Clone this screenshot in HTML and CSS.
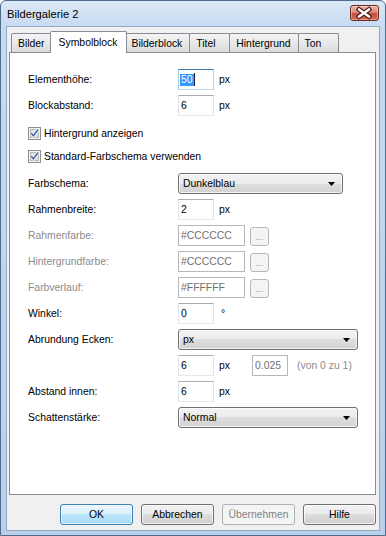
FILE: index.html
```html
<!DOCTYPE html>
<html lang="de">
<head>
    <meta charset="UTF-8">
    <meta name="viewport" content="width=device-width, initial-scale=1.0">
    <title>Bildergalerie 2</title>
    <link rel="stylesheet" href="styles.css">
</head>
<body>
    <div class="window">
        <div class="titlebar">
            <span class="title">Bildergalerie 2</span>
            <div class="close-btn">
                <svg width="27" height="14" viewBox="0 0 27 14">
                    <path d="M8 3.5 L18 10.5 M18 3.5 L8 10.5" stroke="#4a1a14" stroke-width="4.6" stroke-linecap="square" fill="none"/>
                    <path d="M8 3.5 L18 10.5 M18 3.5 L8 10.5" stroke="#ffffff" stroke-width="2.4" stroke-linecap="square" fill="none"/>
                </svg>
            </div>
        </div>

        <div class="client">
            <div class="tabs">
                <div class="tab">Bilder</div>
                <div class="tab active">Symbolblock</div>
                <div class="tab">Bilderblock</div>
                <div class="tab">Titel</div>
                <div class="tab">Hintergrund</div>
                <div class="tab">Ton</div>
            </div>

            <div class="panel">
                <div class="row">
                    <span class="label">Elementhöhe:</span>
                    <div class="textbox small focus"><span class="sel">50</span><span class="caret"></span></div>
                    <span class="unit">px</span>
                </div>
                <div class="row">
                    <span class="label">Blockabstand:</span>
                    <div class="textbox small">6</div>
                    <span class="unit">px</span>
                </div>

                <div class="check-row first">
                    <span class="checkbox">
                        <svg width="13" height="13" viewBox="0 0 13 13">
                            <rect x="0.5" y="0.5" width="12" height="12" fill="#f4f4f4" stroke="#8e8f8f"/>
                            <rect x="2.5" y="2.5" width="8" height="8" fill="#dde0e5" stroke="#b4b9bf"/>
                            <path d="M3.2 6.2 L5.4 8.8 L9.8 3" fill="none" stroke="#ffffff" stroke-width="3"/>
                            <path d="M3.2 6.2 L5.4 8.8 L9.8 3" fill="none" stroke="#4b62a0" stroke-width="1.6"/>
                        </svg>
                    </span>
                    <span>Hintergrund anzeigen</span>
                </div>
                <div class="check-row last">
                    <span class="checkbox">
                        <svg width="13" height="13" viewBox="0 0 13 13">
                            <rect x="0.5" y="0.5" width="12" height="12" fill="#f4f4f4" stroke="#8e8f8f"/>
                            <rect x="2.5" y="2.5" width="8" height="8" fill="#dde0e5" stroke="#b4b9bf"/>
                            <path d="M3.2 6.2 L5.4 8.8 L9.8 3" fill="none" stroke="#ffffff" stroke-width="3"/>
                            <path d="M3.2 6.2 L5.4 8.8 L9.8 3" fill="none" stroke="#4b62a0" stroke-width="1.6"/>
                        </svg>
                    </span>
                    <span>Standard-Farbschema verwenden</span>
                </div>

                <div class="row">
                    <span class="label">Farbschema:</span>
                    <div class="combo short">
                        <span>Dunkelblau</span>
                        <svg class="arrow" width="7" height="4" viewBox="0 0 7 4"><path d="M0 0 H7 L3.5 4 Z" fill="#000"/></svg>
                    </div>
                </div>
                <div class="row">
                    <span class="label">Rahmenbreite:</span>
                    <div class="textbox small">2</div>
                    <span class="unit">px</span>
                </div>
                <div class="row">
                    <span class="label disabled">Rahmenfarbe:</span>
                    <div class="textbox color disabled">#CCCCCC</div>
                    <div class="dots-btn">...</div>
                </div>
                <div class="row">
                    <span class="label disabled">Hintergrundfarbe:</span>
                    <div class="textbox color disabled">#CCCCCC</div>
                    <div class="dots-btn">...</div>
                </div>
                <div class="row">
                    <span class="label disabled">Farbverlauf:</span>
                    <div class="textbox color disabled">#FFFFFF</div>
                    <div class="dots-btn">...</div>
                </div>
                <div class="row">
                    <span class="label">Winkel:</span>
                    <div class="textbox small">0</div>
                    <span class="degree">°</span>
                </div>
                <div class="row">
                    <span class="label">Abrundung Ecken:</span>
                    <div class="combo wide">
                        <span>px</span>
                        <svg class="arrow" width="7" height="4" viewBox="0 0 7 4"><path d="M0 0 H7 L3.5 4 Z" fill="#000"/></svg>
                    </div>
                </div>
                <div class="row">
                    <span class="label"></span>
                    <div class="textbox small">6</div>
                    <span class="unit">px</span>
                    <div class="textbox small disabled ratio">0.025</div>
                    <span class="hint">(von 0 zu 1)</span>
                </div>
                <div class="row">
                    <span class="label">Abstand innen:</span>
                    <div class="textbox small">6</div>
                    <span class="unit">px</span>
                </div>
                <div class="row">
                    <span class="label">Schattenstärke:</span>
                    <div class="combo wide">
                        <span>Normal</span>
                        <svg class="arrow" width="7" height="4" viewBox="0 0 7 4"><path d="M0 0 H7 L3.5 4 Z" fill="#000"/></svg>
                    </div>
                </div>
            </div>

            <div class="buttons">
                <div class="btn default">OK</div>
                <div class="btn">Abbrechen</div>
                <div class="btn disabled">Übernehmen</div>
                <div class="btn">Hilfe</div>
            </div>
        </div>
    </div>
</body>
</html>
```

FILE: styles.css
```css
* {
    margin: 0;
    padding: 0;
    box-sizing: border-box;
}

body {
    width: 386px;
    height: 536px;
    overflow: hidden;
    font-family: "Liberation Sans", Arial, sans-serif;
    font-size: 10.4px;
    color: #000;
    background: #fff;
}

/* window frame */
.window {
    width: 386px;
    height: 536px;
    border: 1px solid #4f6c8f;
    border-radius: 6px 6px 0 0;
    background: linear-gradient(#dbe7f6, #c7daf0 26px, #bad0ea);
    padding: 0 6px 5px;
    display: flex;
    flex-direction: column;
}

.titlebar {
    height: 26px;
    display: flex;
    justify-content: space-between;
    align-items: flex-start;
}

.title {
    font-size: 11.2px;
    margin-top: 7px;
    color: #000;
}

.close-btn {
    width: 29px;
    height: 16px;
    margin-top: 4px;
    border: 1px solid #6e2a22;
    border-radius: 3px;
    background: linear-gradient(#eab4a8, #d98e7f 45%, #c5523d 52%, #cf6b52);
    box-shadow: inset 0 0 0 1px rgba(255, 255, 255, 0.35);
}

.close-btn svg {
    display: block;
}

/* client area */
.client {
    flex: 1;
    background: #f0f0f0;
    box-shadow: 0 0 0 1px #93a9c4;
    padding: 4px 3px 5px 2px;
    display: flex;
    flex-direction: column;
}

.tabs {
    display: flex;
    align-items: flex-end;
    height: 21px;
    padding-left: 2px;
    position: relative;
    z-index: 1;
}

.tab {
    height: 19px;
    min-width: 41px;
    padding: 1px 7px 0 6px;
    line-height: 17px;
    border: 1px solid #898c95;
    border-bottom: none;
    border-radius: 2px 2px 0 0;
    margin-right: -1px;
    background: linear-gradient(#f4f4f4, #e6e6e6 60%, #dadada);
}

.tab.active {
    height: 22px;
    padding: 1px 9px 0 8px;
    line-height: 19px;
    margin: 0 -3px -1px -2px;
    background: #fff;
    position: relative;
    z-index: 2;
}

.panel {
    height: 443px;
    background: #fff;
    border: 1px solid #898c95;
    padding: 16px 0 0 18px;
    display: flex;
    flex-direction: column;
    gap: 5px;
}

/* form rows */
.row {
    display: flex;
    align-items: center;
    height: 21px;
}

.label {
    width: 150px;
    flex-shrink: 0;
}

.label.disabled {
    color: #8c8c8c;
}

.textbox {
    height: 21px;
    border: 1px solid;
    border-color: #abadb3 #e2e3ea #e3e9ef #e2e3ea;
    background: #fff;
    padding-left: 2px;
    line-height: 19px;
    white-space: nowrap;
}

.textbox.small {
    width: 36px;
}

.textbox.color {
    width: 67px;
}

.textbox.focus {
    border-color: #3d7bad #b5cfe7 #b7d9ed #a4c9e3;
    padding-left: 1px;
    display: flex;
    align-items: center;
}

.textbox.disabled {
    border-color: #b4b8bc;
    color: #707070;
}

.sel {
    background: #3399ff;
    color: #fff;
    padding: 0 1px;
    line-height: 12px;
}

.caret {
    width: 1px;
    height: 13px;
    background: #222;
}

.unit {
    margin-left: 5px;
}

.degree {
    margin-left: 7px;
}

.textbox.ratio {
    margin-left: 22px;
}

.hint {
    margin-left: 9px;
    color: #8c8c8c;
}

.dots-btn {
    width: 19px;
    height: 19px;
    margin-left: 5px;
    margin-top: 2px;
    border: 1px solid #b4b8bc;
    border-radius: 3px;
    background: #f4f4f4;
    color: #8c8c8c;
    font-size: 9px;
    line-height: 19px;
    text-align: center;
}

/* checkboxes */
.check-row {
    display: flex;
    align-items: center;
    gap: 3px;
    height: 18px;
}

.check-row.first {
    margin-top: 3px;
}

.check-row.last {
    margin-bottom: 3px;
}

.checkbox svg {
    display: block;
}

/* dropdowns */
.combo {
    height: 21px;
    border: 1px solid #707070;
    border-radius: 3px;
    background: linear-gradient(#f3f3f3, #ebebeb 50%, #dedede 50%, #d2d2d2);
    box-shadow: inset 0 0 0 1px rgba(255, 255, 255, 0.7);
    display: flex;
    align-items: center;
    justify-content: space-between;
    padding: 0 7px 0 4px;
}

.combo.short {
    width: 165px;
}

.combo.wide {
    width: 180px;
}

.arrow {
    display: block;
}

/* dialog buttons */
.buttons {
    display: flex;
    justify-content: flex-end;
    gap: 8px;
    margin-top: 9px;
}

.btn {
    width: 73px;
    height: 21px;
    border: 1px solid #707070;
    border-radius: 3px;
    background: linear-gradient(#f2f2f2, #ebebeb 50%, #dddddd 50%, #cfcfcf);
    box-shadow: inset 0 0 0 1px rgba(255, 255, 255, 0.7);
    text-align: center;
    line-height: 19px;
}

.btn.default {
    border-color: #3c7fb1;
    background: linear-gradient(#eaf6fd, #d9f0fc 50%, #bee6fd 50%, #a7d9f5);
    box-shadow: inset 0 0 0 1px rgba(255, 255, 255, 0.6);
}

.btn.disabled {
    border-color: #adb2b5;
    background: #f4f4f4;
    color: #838383;
    box-shadow: none;
}
```
